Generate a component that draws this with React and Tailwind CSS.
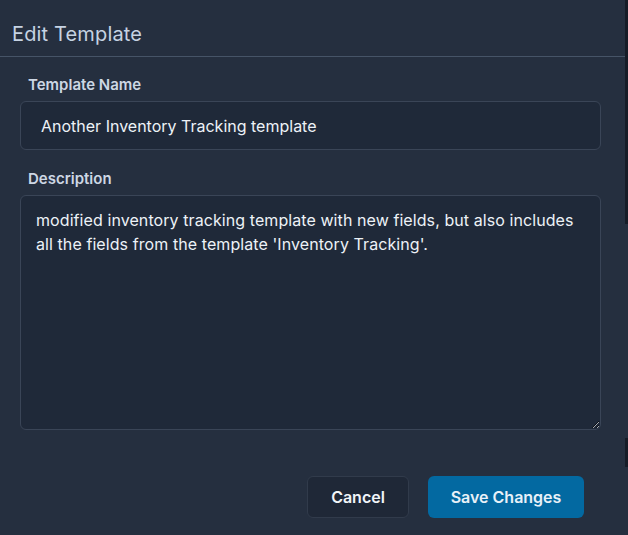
export default function App() {
  const font = { fontFamily: "Inter, 'Noto Sans', sans-serif" };
  return (
    <div className="flex w-[628px] h-[535px] bg-[#252f3f]" style={font}>
      <div className="flex flex-col w-[625px] h-full bg-[#252f3f]">
        <div className="pl-3 pt-5 pb-2 border-b border-[#465467]">
          <h2 className="text-[20px] leading-[28px] tracking-[0.15px] text-[#c6d3e3]">Edit Template</h2>
        </div>
        <div className="flex flex-col px-5 pt-[18px]">
          <label className="pl-2 text-[15px] leading-5 font-semibold text-[#cdd7e4]">Template Name</label>
          <input
            defaultValue="Another Inventory Tracking template"
            className="mt-1.5 h-[49px] w-[581px] rounded-md border border-[#3a4557] bg-[#1f2939] px-5 text-[16px] text-[#edf2f7] outline-none"
          />
          <label className="mt-[19px] pl-2 text-[15px] leading-5 font-semibold text-[#cdd7e4]">Description</label>
          <textarea
            defaultValue="modified inventory tracking template with new fields, but also includes all the fields from the template 'Inventory Tracking'."
            className="mt-1.5 h-[235px] w-[581px] rounded-md border border-[#3a4557] bg-[#1f2939] pl-[15px] pr-4 pt-[12px] text-[16px] leading-6 tracking-[0.08px] text-[#edf2f7] outline-none"
          />
        </div>
        <div className="flex justify-end gap-[19px] pr-[41px] pt-[46px]">
          <button className="h-[42px] w-[102px] rounded-md border border-[#313b4b] bg-[#1f2837] text-[16px] font-semibold text-[#f1f5f9]">
            Cancel
          </button>
          <button className="h-[42px] w-[156px] rounded-md bg-[#0369a1] text-[16px] font-semibold text-[#e9f1f8]">
            Save Changes
          </button>
        </div>
      </div>
      <div className="flex flex-col w-[3px] h-full">
        <div className="h-[224px] bg-[#161c27]" />
        <div className="h-[214px] bg-[#252f3f]" />
        <div className="h-[29px] bg-[#161c27]" />
        <div className="flex-1 bg-[#252f3f]" />
      </div>
    </div>
  );
}
